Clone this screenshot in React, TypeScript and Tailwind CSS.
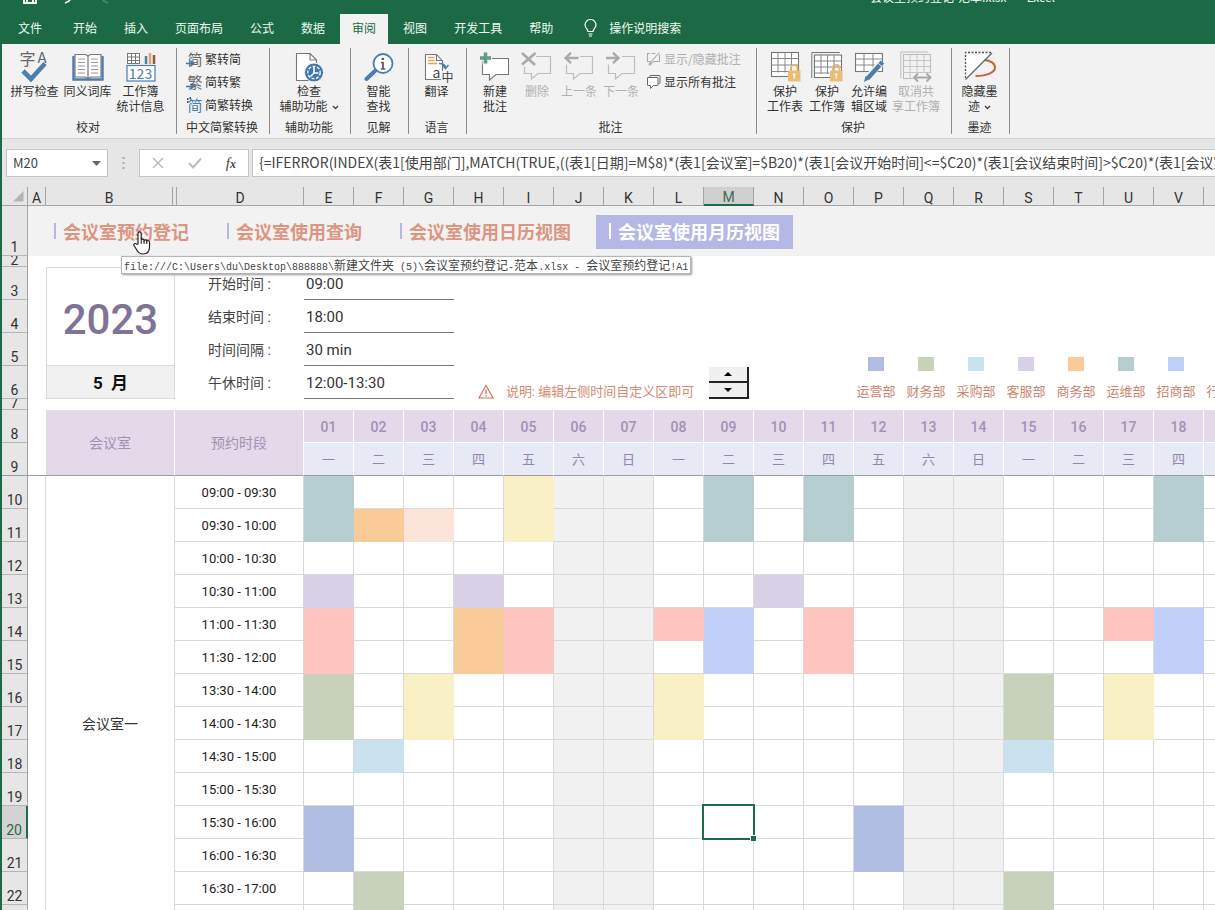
import React from "react";

type Kids = { children?: React.ReactNode };

const tabs = ["开始", "插入", "页面布局", "公式", "数据", "审阅", "视图", "开发工具", "帮助"];

/* ---------- ribbon icons ---------- */

const Svg = ({ children, w = 30, h = 30 }: Kids & { w?: number; h?: number }) => (
  <svg width={w} height={h} viewBox={`0 0 ${w} ${h}`} fill="none" aria-hidden="true">
    {children}
  </svg>
);

const SpellIcon = () => (
  <span className="relative block h-[30px] w-[30px] text-[#666]">
    <span className="absolute -top-0.5 left-0 text-[16px] leading-[16px]">字</span>
    <span className="absolute -top-0.5 left-[18px] text-[15px] leading-[14px]">A</span>
    <span className="absolute inset-0">
      <Svg>
        <path d="M3 19l8 8L25 11.500" stroke="#4a7db0" strokeWidth="4.600" />
      </Svg>
    </span>
  </span>
);

const BookIcon = () => (
  <Svg w={32}>
    <path d="M1.500 4V27.500h29V4" stroke="#4a7db0" strokeWidth="2.400" />
    <path d="M3 2.500h10.500l2.500 1.500 2.500-1.500H29V25H18.500L16 26.500 13.500 25H3z" fill="#fff" stroke="#777" strokeWidth="1.100" />
    <path d="M16 4v22" stroke="#777" strokeWidth="1.200" />
    <path d="M6 7h7M6 10.500h7M6 14h7M6 17.500h7M6 21h7M19 7h7M19 10.500h7M19 14h7M19 17.500h7M19 21h7" stroke="#999" />
  </Svg>
);

const StatsIcon = () => (
  <span className="relative block h-[30px] w-[30px]">
    <span className="absolute inset-0">
      <Svg>
        <rect x="1.500" y="1.500" width="12" height="10" fill="#fff" stroke="#777" />
        <path d="M5.500 1.500v10M9.500 1.500v10M1.500 5h12M1.500 8.500h12" stroke="#777" />
        <path d="M20 4v8" stroke="#4a7db0" strokeWidth="2.500" />
        <path d="M24 1v11" stroke="#e0a95a" strokeWidth="2.500" />
        <path d="M28 3v9" stroke="#8a5a44" strokeWidth="2.500" />
        <rect x="1" y="13.500" width="28" height="15.500" fill="#fff" stroke="#4a7db0" strokeWidth="1.200" />
      </Svg>
    </span>
    <span className="absolute inset-x-0 top-[14px] text-center text-[14px] leading-[15px] text-[#4a7db0]">123</span>
  </span>
);

const AccessIcon = () => (
  <Svg>
    <path d="M2.500 1.500h13.500l6.500 6.500v20.500h-20z" fill="#fff" stroke="#777" strokeWidth="1.100" />
    <path d="M16 1.500v6.500h6.500" stroke="#777" strokeWidth="1.100" />
    <circle cx="20" cy="20.500" r="9.500" fill="#3f78b0" stroke="#f2f2f2" />
    <circle cx="20" cy="20.500" r="6.200" stroke="#fff" strokeWidth="1.300" strokeDasharray="3 1.500" />
    <path d="M20 14.500V21h4.500M20 21l-3.500 3.500" stroke="#fff" strokeWidth="1.600" />
  </Svg>
);

const LookupIcon = () => (
  <Svg>
    <path d="M11.500 18.500L2.500 27" stroke="#4a7db0" strokeWidth="4" strokeLinecap="round" />
    <circle cx="19" cy="11.500" r="9.500" fill="#fff" stroke="#4a7db0" strokeWidth="1.800" />
    <path d="M19 10v7M17 10.500h2M16.800 17h4.400" stroke="#555" strokeWidth="1.700" />
    <circle cx="18.800" cy="7" r="1.300" fill="#555" />
  </Svg>
);

const TranslateIcon = () => (
  <span className="relative block h-[30px] w-[30px]">
    <span className="absolute inset-0">
      <Svg>
        <path d="M3.500 2.500h11l6 6.500v18.500h-17z" fill="#fff" stroke="#777" strokeWidth="1.100" />
        <path d="M14.500 2.500v6h6" stroke="#777" strokeWidth="1.100" />
        <path d="M6 5.500h6.500M6 8.500h6.500M6 11.500h9" stroke="#e0a95a" strokeWidth="1.300" />
        <path d="M17 11.500c4 0 6.500 1 6.500 4.500m-3-3l3 3.500 3-3.500" stroke="#4a7db0" strokeWidth="1.500" />
      </Svg>
    </span>
    <span className="absolute bottom-[3px] left-[11px] text-[14px] leading-[14px] text-[#444]">a</span>
    <span className="absolute -bottom-px -right-0.5 bg-[#f2f2f2] text-[12px] leading-[12px] text-[#444]">中</span>
  </span>
);

const bubble = "M3.500 6.500h26v16H17l-6.500 5.500v-5.500h-7z";

const NewCommentIcon = () => (
  <Svg w={32}>
    <path d={bubble} fill="#fff" stroke="#777" strokeWidth="1.100" />
    <path d="M6.500 0v12.500M.500 6h12.500" stroke="#f2f2f2" strokeWidth="6" />
    <path d="M6.500 .500v11M1 6h11" stroke="#5c9c88" strokeWidth="3.500" />
  </Svg>
);

const DeleteCommentIcon = () => (
  <Svg w={32}>
    <path d="M15 4.500h14.500v17H17l-6.500 5.500v-5.500h-7v-7" stroke="#bdbdbd" strokeWidth="1.200" />
    <path d="M1 1l13 12M14.500 1L1 12.500" stroke="#a9a9a9" strokeWidth="2.600" />
  </Svg>
);

const ArrowCommentIcon = ({ next }: { next?: boolean }) => (
  <Svg w={32}>
    <path d="M17 4.500h12.500v17H17L10.500 27v-5.500h-7v-9" stroke="#bdbdbd" strokeWidth="1.200" />
    {next ? (
      <path d="M1 6h12M8 .800L13.500 6 8 11.200" stroke="#a9a9a9" strokeWidth="2.400" />
    ) : (
      <path d="M2.500 6h13M8 .800L2.500 6 8 11.200" stroke="#a9a9a9" strokeWidth="2.400" />
    )}
  </Svg>
);

const ToggleCommentIcon = () => (
  <Svg w={16} h={16}>
    <path d="M4 2.500H1.500v8H4V14l3.500-3.500h6v-7M5.500 2.500h4M2.500 13.500l11-12" stroke="#aaa" strokeWidth="1.100" />
  </Svg>
);

const AllCommentsIcon = () => (
  <Svg w={16} h={16}>
    <path d="M4 3.500V2q0-.500.500-.500H13.500q.500 0 .500.500V9q0 .500-.500.500H12.500" stroke="#666" />
    <path d="M2 3.500h9.500q.500 0 .500.500v7q0 .500-.500.500H7.500L4.500 14.500v-3H2q-.500 0-.500-.500V4q0-.500.500-.500z" fill="#fff" stroke="#666" />
  </Svg>
);

const Lock = () => (
  <g>
    <path d="M22 20v-3a3.200 3.200 0 016.400 0v3" stroke="#e5b468" strokeWidth="1.800" />
    <rect x="19" y="19.500" width="12.500" height="11" fill="#ecbd74" />
    <path d="M25.200 22.500v5M24 23.500h2.500" stroke="#fff" strokeWidth="1.300" />
  </g>
);

const ProtectSheetIcon = () => (
  <Svg w={32} h={32}>
    <rect x="2.500" y="1.500" width="27" height="24" fill="#fff" stroke="#777" strokeWidth="1.100" />
    <path d="M9 1.500v20M16 1.500v20M22.500 1.500v20M2.500 7.500h27M2.500 14h27M2.500 20.500h17" stroke="#888" />
    <Lock />
  </Svg>
);

const ProtectBookIcon = () => (
  <Svg w={32} h={32}>
    <path d="M.800 27V1.500h28" stroke="#777" />
    <rect x="3.500" y="4" width="27" height="22.500" fill="#fff" stroke="#777" strokeWidth="1.100" />
    <path d="M10 4v19M16.500 4v19M23 4v19M3.500 10h27M3.500 16h27M3.500 22h15" stroke="#888" />
    <Lock />
  </Svg>
);

const EditRangeIcon = () => (
  <Svg w={32} h={32}>
    <rect x="2.500" y="2.500" width="27" height="18" fill="#fff" stroke="#777" strokeWidth="1.100" />
    <path d="M11 2.500v18M20 2.500v18M2.500 8h27M2.500 14h27" stroke="#888" />
    <path d="M29 10.500L14.500 27" stroke="#f2f2f2" strokeWidth="6.500" />
    <path d="M29.500 11L14.500 27.500" stroke="#4a7db0" strokeWidth="4.400" />
    <path d="M12.500 25l3.500 3.500-5 2.500z" fill="#4a7db0" />
    <path d="M25.500 12.500l4 3.500" stroke="#f2f2f2" />
  </Svg>
);

const UnshareIcon = () => (
  <Svg w={32} h={32}>
    <path d="M.800 27V1h27" stroke="#bdbdbd" />
    <rect x="3.500" y="3.500" width="27" height="24" stroke="#bdbdbd" strokeWidth="1.100" />
    <path d="M10 3.500v24M17 3.500v24M24 3.500v24M3.500 9.500h27M3.500 15.500h27M3.500 21.500h27" stroke="#c4c4c4" />
    <rect x="13" y="22" width="18" height="9" fill="#f2f2f2" />
    <path d="M14 26.500h16M18 22.500l-4 4 4 4M26.500 22.500l4 4-4 4" stroke="#a9a9a9" strokeWidth="2" />
  </Svg>
);

const InkIcon = () => (
  <Svg w={32} h={32}>
    <path d="M1.500 28V1.500H27z" fill="#fff" />
    <path d="M1.500 27V1.500H27" stroke="#555" strokeWidth="1.300" strokeDasharray="2 1.500" />
    <path d="M20.500 9c6 .500 10.500 3.500 10.500 7.500 0 5-8 8.500-19.500 8.500" stroke="#c8643c" strokeWidth="2" />
    <path d="M1.500 28.500L28 2" stroke="#666" strokeWidth="1.300" />
  </Svg>
);

const Chevron = () => (
  <svg className="ml-1 inline-block" width="7" height="5" viewBox="0 0 7 5" fill="none" aria-hidden="true">
    <path d="M1 1l2.500 2.500L6 1" stroke="#444" strokeWidth="1.300" />
  </svg>
);

/* ---------- ribbon parts ---------- */

const BigButton = ({ icon, children, off, width }: Kids & { icon: React.ReactNode; off?: boolean; width: string }) => (
  <button type="button" className={`flex shrink-0 flex-col items-center whitespace-nowrap leading-[15px] ${width} ${off ? "text-[#b0b0b0]" : "text-[#333]"}`}>
    <span className="flex h-8 items-center justify-center">{icon}</span>
    <span>{children}</span>
  </button>
);

const Group = ({ title, width, pad = "", children }: Kids & { title: string; width: string; pad?: string }) => (
  <section aria-label={title} className={`flex shrink-0 flex-col border-r border-[#8c8c8c] pr-0.5 ${width}`}>
    <div className={`flex flex-1 items-start pt-[3px] ${pad}`}>{children}</div>
    <h2 className="text-center leading-[14px] text-[#333]">{title}</h2>
  </section>
);

const SmallButton = ({ icon, children, off }: Kids & { icon: React.ReactNode; off?: boolean }) => (
  <button type="button" className={`flex h-[23px] items-center gap-0.5 whitespace-nowrap ${off ? "text-[#b0b0b0]" : "text-[#333]"}`}>
    {icon}
    {children}
  </button>
);

const HanIcon = ({ glyph, blue }: { glyph: string; blue?: boolean }) => (
  <span className={`relative block w-4 text-[15px] leading-4 ${blue ? "text-[#4a7db0]" : "text-[#666]"}`}>
    {glyph}
    {blue ? (
      <svg className="absolute -left-px top-0" width="6" height="9" viewBox="0 0 6 9" fill="none" aria-hidden="true">
        <path d="M1 2h1.500M3.500 1H5M1 5h1.500" stroke="#555" strokeWidth="1.800" />
      </svg>
    ) : (
      <svg className="absolute -left-px bottom-0" width="9" height="7" viewBox="0 0 9 7" fill="none" aria-hidden="true">
        <path d="M0 3.500h7M4.500 1L7.500 3.500 4.500 6" stroke="#3f78b0" strokeWidth="1.700" />
      </svg>
    )}
  </span>
);

/* ---------- sheet data ---------- */

const columns = ["E", "F", "G", "H", "I", "J", "K", "L", "M", "N", "O", "P", "Q", "R", "S", "T", "U", "V", "W"];
const weekdays = ["一", "二", "三", "四", "五", "六", "日"];
const slots = [
  "09:00 - 09:30", "09:30 - 10:00", "10:00 - 10:30", "10:30 - 11:00", "11:00 - 11:30",
  "11:30 - 12:00", "13:30 - 14:00", "14:00 - 14:30", "14:30 - 15:00", "15:00 - 15:30",
  "15:30 - 16:00", "16:00 - 16:30", "16:30 - 17:00", "17:00 - 17:30", "17:30 - 18:00",
];

const fills = {
  teal: "bg-[#b6ced0] border-[#b6ced0]",
  orange: "bg-[#f9cb99] border-[#f9cb99]",
  peach: "bg-[#fce4d9] border-[#fce4d9]",
  yellow: "bg-[#faf0c5] border-[#faf0c5]",
  purple: "bg-[#d9d2e6] border-[#d9d2e6]",
  pink: "bg-[#fdc4c0] border-[#fdc4c0]",
  blue: "bg-[#c0d0f8] border-[#c0d0f8]",
  green: "bg-[#c8d2bb] border-[#c8d2bb]",
  sky: "bg-[#cae2f0] border-[#cae2f0]",
  indigo: "bg-[#b1bee1] border-[#b1bee1]",
};
type Fill = keyof typeof fills;

/* [day, first row, last row, department colour] */
const bookings: [number, number, number, Fill][] = [
  [1, 10, 11, "teal"], [9, 10, 11, "teal"], [11, 10, 11, "teal"], [18, 10, 11, "teal"],
  [2, 11, 11, "orange"], [3, 11, 11, "peach"], [5, 10, 11, "yellow"],
  [1, 13, 13, "purple"], [4, 13, 13, "purple"], [10, 13, 13, "purple"],
  [1, 14, 15, "pink"], [5, 14, 15, "pink"], [8, 14, 14, "pink"], [11, 14, 15, "pink"], [17, 14, 14, "pink"],
  [4, 14, 15, "orange"], [9, 14, 15, "blue"], [18, 14, 15, "blue"],
  [1, 16, 17, "green"], [15, 16, 17, "green"],
  [3, 16, 17, "yellow"], [8, 16, 17, "yellow"], [17, 16, 17, "yellow"],
  [2, 18, 18, "sky"], [15, 18, 18, "sky"],
  [1, 20, 21, "indigo"], [12, 20, 21, "indigo"],
  [2, 22, 23, "green"], [15, 22, 23, "green"],
];

const cellFill = (day: number, row: number) => {
  const hit = bookings.find(([d, a, b]) => d === day && row >= a && row <= b);
  if (hit) return fills[hit[3]];
  return (day - 1) % 7 > 4 ? "bg-[#f1f1f1] border-[#d9d9d9]" : "border-[#d9d9d9]";
};

const legend: [string, string][] = [
  ["运营部", "bg-[#b1bee1]"], ["财务部", "bg-[#c8d2bb]"], ["采购部", "bg-[#cae2f0]"], ["客服部", "bg-[#d9d2e6]"],
  ["商务部", "bg-[#f9cb99]"], ["运维部", "bg-[#b6ced0]"], ["招商部", "bg-[#c0d0f8]"], ["行政部", "bg-[#fce4d9]"],
];

const RowHead = ({ n, short, active }: { n: number; short?: boolean; active?: boolean }) => (
  <th
    scope="row"
    className={`border-b border-r p-0 align-bottom text-[14px] font-normal ${n === 9 ? "border-b-[#9b9ca6]" : "border-b-[#b5b5b5]"} ${
      active ? "border-r-2 border-r-[#1f6b47] bg-[#d3d3d3] text-[#1f6b47]" : "border-r-[#a5a5a5] bg-[#e6e6e6] text-[#333]"
    }`}
  >
    <div className={`flex items-end justify-center overflow-hidden ${short ? "h-[10px] leading-[12px]" : "h-4 leading-4"}`}>{n}</div>
  </th>
);

const Setting = ({ label, value }: { label: string; value: string }) => (
  <>
    <td colSpan={2} className="p-0 pl-[33px] pt-0.5 text-[14px] text-[#444]">{label} :</td>
    <td colSpan={3} className="border-b border-[#777] p-0 pl-0.5 pt-0.5 text-[15px] text-[#333]">{value}</td>
  </>
);

const NavLink = ({ children, active }: Kids & { active?: boolean }) => (
  <a
    href="#sheet"
    className={`flex h-[34px] items-center gap-[7px] whitespace-nowrap px-[13px] pb-0.5 text-[18px] font-bold ${active ? "bg-[#b5b8e5] text-white" : "text-[#dc9580]"}`}
  >
    <span className={`h-4 w-0.5 ${active ? "bg-white" : "bg-[#b5b8e5]"}`} />
    {children}
  </a>
);

const Mono = ({ children }: Kids) => (
  <span className="whitespace-pre font-['Liberation_Mono',monospace] text-[10px]">{children}</span>
);

function Sheet() {
  return (
    <table id="sheet" className="w-max table-fixed border-separate border-spacing-0 font-[Roboto,'Noto_Sans_CJK_SC',sans-serif]">
      <colgroup>
        <col className="w-[26px]" />
        <col className="w-[18px]" />
        <col className="w-[127px]" />
        <col className="w-[2px]" />
        <col className="w-[2px]" />
        <col className="w-[127px]" />
        {columns.map((c) => <col key={c} className="w-[50px]" />)}
      </colgroup>
      <thead>
        <tr className="h-[19px] bg-[#e6e6e6] text-[14px] leading-[14px] text-[#333]">
          <td className="border-b border-r border-[#a5a5a5] p-0">
            <svg className="ml-auto mr-[3px]" width="11" height="11" viewBox="0 0 11 11" aria-hidden="true"><path d="M10.500 0v10.500H0z" fill="#b3b3b3" /></svg>
          </td>
          <th scope="col" className="border-b border-r border-[#a5a5a5] p-0 pt-[3px] font-normal">A</th>
          <th scope="col" className="border-b border-r border-[#a5a5a5] p-0 pt-[3px] font-normal">B</th>
          <td colSpan={2} className="border-b border-r border-[#a5a5a5] p-0" />
          <th scope="col" className="border-b border-r border-[#a5a5a5] p-0 pt-[3px] font-normal">D</th>
          {columns.map((c) => (
            <th
              key={c}
              scope="col"
              className={`p-0 pt-[3px] font-normal ${c === "M" ? "border-b-2 border-r border-b-[#1f6b47] border-r-[#a5a5a5] bg-[#d0d0d0] text-[#3c6b54]" : "border-b border-r border-[#a5a5a5]"}`}
            >
              {c}
            </th>
          ))}
        </tr>
      </thead>
      <tbody>
        <tr className="h-[50px]">
          <RowHead n={1} />
          <td colSpan={24} className="bg-[#f2f2f2] p-0">
            <nav aria-label="会议室" className="flex items-center gap-3 pl-[13px] pt-0.5 font-['Noto_Sans_CJK_SC',sans-serif]">
              <NavLink>会议室预约登记</NavLink>
              <NavLink>会议室使用查询</NavLink>
              <NavLink>会议室使用日历视图</NavLink>
              <NavLink active>会议室使用月历视图</NavLink>
            </nav>
          </td>
        </tr>
        <tr className="h-[11px]">
          <RowHead n={2} short />
          <td colSpan={24} className="p-0" />
        </tr>
        <tr className="h-[33px]">
          <RowHead n={3} />
          <td rowSpan={5} />
          <td colSpan={2} rowSpan={3} className="border border-[#d9d9d9] p-0 pt-1.5 text-center text-[42px] font-medium leading-[44px] text-[#7f7396]">2023</td>
          <Setting label="开始时间" value="09:00" />
          <td colSpan={16} />
        </tr>
        <tr className="h-[33px]">
          <RowHead n={4} />
          <Setting label="结束时间" value="18:00" />
          <td colSpan={16} />
        </tr>
        <tr className="h-[33px]">
          <RowHead n={5} />
          <Setting label="时间间隔" value="30 min" />
          <td colSpan={8} />
          {legend.map(([name, color]) => (
            <td key={name} rowSpan={2} className="p-0 pr-1.5 align-bottom">
              <div className="flex flex-col items-center gap-[13px] whitespace-nowrap text-[13px] leading-[15px] text-[#cb866f]">
                <span className={`h-[14px] w-4 ${color}`} />
                {name}
              </div>
            </td>
          ))}
        </tr>
        <tr className="h-[33px]">
          <RowHead n={6} />
          <td colSpan={2} className="border-x border-b border-[#d9d9d9] bg-[#f1f1f1] p-0 pt-[3px] text-center text-[17px] font-bold text-[#111]">5&nbsp; 月</td>
          <Setting label="午休时间" value="12:00-13:30" />
          <td colSpan={5} className="p-0 align-bottom">
            <p className="flex items-center gap-3 whitespace-nowrap pl-6 text-[13px] leading-[15px] text-[#d58a72]">
              <svg width="16" height="15" viewBox="0 0 16 15" fill="none" aria-hidden="true">
                <path d="M8 1.500L15 14H1z" stroke="#d0735a" strokeWidth="1.200" />
                <path d="M8 5.500v4.500M8 11v1.500" stroke="#d0735a" strokeWidth="1.300" />
              </svg>
              说明: 编辑左侧时间自定义区即可
            </p>
          </td>
          <td colSpan={3} className="p-0 pl-[5px]">
            <div className="flex w-10 flex-col">
              <button type="button" aria-label="上一月" className="flex h-4 items-center justify-center border-b-2 border-r-2 border-[#222] bg-[#f0f0f0]">
                <svg width="8" height="4" viewBox="0 0 8 4" aria-hidden="true"><path d="M4 0l4 4H0z" fill="#000" /></svg>
              </button>
              <button type="button" aria-label="下一月" className="flex h-4 items-center justify-center border-b-2 border-r-2 border-[#222] bg-[#f0f0f0]">
                <svg width="8" height="4" viewBox="0 0 8 4" aria-hidden="true"><path d="M4 4l4-4H0z" fill="#000" /></svg>
              </button>
            </div>
          </td>
        </tr>
        <tr className="h-[11px]">
          <RowHead n={7} short />
          <td colSpan={23} className="p-0" />
        </tr>
        <tr className="h-[33px] bg-[#e3d9e9] text-[14px] text-[#9f92b5]">
          <RowHead n={8} />
          <td rowSpan={2} className="border-b border-[#9b9ca6] bg-white p-0" />
          <th scope="col" colSpan={2} rowSpan={2} className="border-b border-r border-b-[#9b9ca6] border-r-white p-0 pt-0.5 font-normal">会议室</th>
          <th scope="col" colSpan={2} rowSpan={2} className="border-b border-r border-b-[#9b9ca6] border-r-white p-0 pt-0.5 font-normal">预约时段</th>
          {columns.map((c, i) => (
            <th key={c} scope="col" className="border-b border-r border-white p-0 pt-0.5 font-medium">{String(i + 1).padStart(2, "0")}</th>
          ))}
        </tr>
        <tr className="h-[33px] bg-[#e7e9f5] text-[13px] text-[#9287ab]">
          <RowHead n={9} />
          {columns.map((c, i) => (
            <td key={c} className="border-b border-r border-b-[#9b9ca6] border-r-white p-0 pt-0.5 text-center">{weekdays[i % 7]}</td>
          ))}
        </tr>
        {slots.map((slot, i) => {
          const row = i + 10;
          return (
            <tr key={slot} className="h-[33px]">
              <RowHead n={row} active={row === 20} />
              {i === 0 && (
                <>
                  <td rowSpan={15} className="border-r border-[#d9d9d9] p-0" />
                  <td rowSpan={15} colSpan={2} className="border-b border-r border-[#d9d9d9] p-0 pt-0.5 text-center text-[14px] text-[#333]">会议室一</td>
                </>
              )}
              <td colSpan={2} className="border-b border-r border-[#d9d9d9] p-0 pt-0.5 text-center text-[13px] text-[#222]">{slot}</td>
              {columns.map((c, d) => (
                <td key={c} className={`relative border-b border-r p-0 ${cellFill(d + 1, row)}`}>
                  {c === "M" && row === 20 && (
                    <span className="absolute -bottom-0.5 -left-0.5 -right-0.5 -top-0.5 z-10 border-2 border-[#1f6b47]">
                      <span className="absolute -bottom-[3px] -right-[3px] h-[6px] w-[6px] border-l border-t border-white bg-[#1f6b47]" />
                    </span>
                  )}
                </td>
              ))}
            </tr>
          );
        })}
      </tbody>
    </table>
  );
}

export default function App() {
  return (
    <div className="flex h-screen flex-col overflow-hidden bg-white font-['Noto_Sans_CJK_SC',sans-serif] text-[12px]">
      <header className="shrink-0 bg-[#1c6a45] text-[#eefaf2]">
        <div className="flex h-[14px] items-start justify-between overflow-hidden">
          <div className="flex h-1 items-end gap-6 pl-[23px]">
            <svg width="14" height="14" viewBox="0 0 14 14" fill="none" aria-hidden="true">
              <path d="M1 1h12v12H1zM4 13V9h6v4" stroke="#fff" strokeWidth="1.800" />
            </svg>
            <svg width="14" height="14" viewBox="0 0 14 14" fill="none" aria-hidden="true">
              <path d="M4 13c4-1 6-3 6-7" stroke="#fff" strokeWidth="1.800" />
            </svg>
            <svg width="14" height="14" viewBox="0 0 14 14" fill="none" aria-hidden="true">
              <path d="M9 13c-4-1-6-3-6-7" stroke="#4c8d6e" strokeWidth="1.800" />
            </svg>
          </div>
          <h1 className="flex h-[6px] items-end whitespace-pre pr-40 leading-[18px]">会议室预约登记-范本.xlsx   -   Excel</h1>
        </div>
        <nav aria-label="功能区" className="flex h-[30px] items-stretch gap-[3px] pl-0.5">
          <button type="button" className="px-4 pb-0.5">文件</button>
          {tabs.map((t) => (
            <button key={t} type="button" className={t === "审阅" ? "bg-[#f2f2f2] px-3 pb-0.5 text-[#1c6a45]" : "px-3 pb-0.5"}>{t}</button>
          ))}
          <button type="button" className="flex items-center gap-3 px-4 pb-0.5">
            <svg width="13" height="18" viewBox="0 0 13 18" fill="none" aria-hidden="true">
              <path d="M4 12.500c0-2.500-3-3.500-3-6.500a5.500 5.500 0 0111 0c0 3-3 4-3 6.500zM4.500 15h4M5 17h3" stroke="#fff" strokeWidth="1.200" />
            </svg>
            操作说明搜索
          </button>
        </nav>
      </header>

      <div className="flex min-h-0 flex-1 flex-col border-l-2 border-[#1c6a45]">
        <div className="flex h-[95px] shrink-0 overflow-hidden border-b border-[#d2d2d2] bg-[#f2f2f2] pb-1 pt-1">
          <Group title="校对" width="w-[175px]" pad="pl-1.5">
            <BigButton width="w-[53px]" icon={<SpellIcon />}>拼写检查</BigButton>
            <BigButton width="w-[53px]" icon={<BookIcon />}>同义词库</BigButton>
            <BigButton width="w-[53px]" icon={<StatsIcon />}>工作簿<br />统计信息</BigButton>
          </Group>
          <Group title="中文简繁转换" width="w-[93px]" pad="pl-[10px]">
            <div className="-mt-1 flex flex-col">
              <SmallButton icon={<HanIcon glyph="简" />}>繁转简</SmallButton>
              <SmallButton icon={<HanIcon glyph="繁" />}>简转繁</SmallButton>
              <SmallButton icon={<HanIcon glyph="简" blue />}>简繁转换</SmallButton>
            </div>
          </Group>
          <Group title="辅助功能" width="w-[81px]" pad="justify-center">
            <BigButton width="w-[64px]" icon={<AccessIcon />}>检查<br />辅助功能<Chevron /></BigButton>
          </Group>
          <Group title="见解" width="w-[58px]" pad="justify-center">
            <BigButton width="w-[42px]" icon={<LookupIcon />}>智能<br />查找</BigButton>
          </Group>
          <Group title="语言" width="w-[58px]" pad="justify-center">
            <BigButton width="w-[42px]" icon={<TranslateIcon />}>翻译</BigButton>
          </Group>
          <Group title="批注" width="w-[290px]" pad="pl-[7px]">
            <BigButton width="w-[42px]" icon={<NewCommentIcon />}>新建<br />批注</BigButton>
            <BigButton width="w-[42px]" off icon={<DeleteCommentIcon />}>删除</BigButton>
            <BigButton width="w-[42px]" off icon={<ArrowCommentIcon />}>上一条</BigButton>
            <BigButton width="w-[42px]" off icon={<ArrowCommentIcon next />}>下一条</BigButton>
            <div className="-mt-1 flex flex-col pl-1">
              <SmallButton off icon={<ToggleCommentIcon />}>显示/隐藏批注</SmallButton>
              <SmallButton icon={<AllCommentsIcon />}>显示所有批注</SmallButton>
            </div>
          </Group>
          <Group title="保护" width="w-[195px]" pad="pl-[7px]">
            <BigButton width="w-[42px]" icon={<ProtectSheetIcon />}>保护<br />工作表</BigButton>
            <BigButton width="w-[42px]" icon={<ProtectBookIcon />}>保护<br />工作簿</BigButton>
            <BigButton width="w-[42px]" icon={<EditRangeIcon />}>允许编<br />辑区域</BigButton>
            <BigButton width="w-[52px]" off icon={<UnshareIcon />}>取消共<br />享工作簿</BigButton>
          </Group>
          <Group title="墨迹" width="w-[58px]" pad="justify-center">
            <BigButton width="w-[42px]" icon={<InkIcon />}>隐藏墨<br />迹<Chevron /></BigButton>
          </Group>
        </div>

        <div className="flex shrink-0 items-center bg-[#e6e6e6] py-[10px] pl-1">
          <div className="flex h-7 w-[102px] items-center border border-[#c6c6c6] bg-white pl-1.5 pr-1">
            <input aria-label="名称框" defaultValue="M20" className="w-0 flex-1 text-[13px] text-[#444] outline-none" />
            <button type="button" aria-label="展开名称框" className="p-0.5">
              <svg width="9" height="5" viewBox="0 0 9 5" aria-hidden="true"><path d="M0 0h9L4.500 5z" fill="#666" /></svg>
            </button>
          </div>
          <svg className="mx-[14px]" width="3" height="14" viewBox="0 0 3 14" aria-hidden="true">
            <path d="M.500 1h2v2h-2zM.500 6h2v2h-2zM.500 11h2v2h-2z" fill="#aaa" />
          </svg>
          <div className="flex h-7 w-[110px] items-center justify-around border border-[#c6c6c6] bg-white">
            <button type="button" aria-label="取消">
              <svg width="12" height="12" viewBox="0 0 12 12" fill="none" aria-hidden="true"><path d="M1 1l10 10M11 1L1 11" stroke="#bbb" strokeWidth="1.500" /></svg>
            </button>
            <button type="button" aria-label="输入">
              <svg width="14" height="12" viewBox="0 0 14 12" fill="none" aria-hidden="true"><path d="M1 6l4 4.500L13 1.500" stroke="#bbb" strokeWidth="2" /></svg>
            </button>
            <button type="button" aria-label="插入函数" className="font-['Liberation_Serif',serif] text-[15px] italic leading-4 text-[#444]">
              f<span className="text-[12px] font-bold">x</span>
            </button>
          </div>
          <input
            aria-label="编辑栏"
            defaultValue="{=IFERROR(INDEX(表1[使用部门],MATCH(TRUE,((表1[日期]=M$8)*(表1[会议室]=$B20)*(表1[会议开始时间]<=$C20)*(表1[会议结束时间]>$C20)*(表1[会议室]"
            className="ml-[3px] h-7 min-w-0 flex-1 border-y border-l border-[#c6c6c6] bg-white pb-0.5 pl-1.5 text-[14px] text-[#444] outline-none"
          />
        </div>

        <main className="relative min-h-0 flex-1 overflow-hidden">
          <Sheet />
          <div role="tooltip" className="absolute left-[119px] top-[69px] z-20 h-[18px] whitespace-nowrap border border-[#b5b5b5] bg-white px-0.5 text-[12px] leading-[15px] text-[#444] shadow-[1px_1px_2px_#999]">
            <Mono>{"file:///C:\\Users\\du\\Desktop\\888888\\"}</Mono>新建文件夹<Mono>{" (5)\\"}</Mono>会议室预约登记<Mono>-</Mono>范本<Mono>{".xlsx - "}</Mono>会议室预约登记<Mono>!A1</Mono>
          </div>
          <svg className="absolute left-[131px] top-[44px] z-30" width="18" height="24" viewBox="0 0 18 24" aria-hidden="true">
            <path
              d="M5 13V2.500a1.600 1.600 0 013.200 0V9c.500-1.300 2.800-1 2.900.500.600-1.200 2.600-.800 2.700.600.700-.900 2.700-.500 2.700 1.200V16c0 4-2 7-6.500 7-3.500 0-5-1.500-6.500-4.500L1 14.500c-.800-1.700 1.300-2.700 2.500-1.300z"
              fill="#fff"
              stroke="#222"
              strokeWidth="1.200"
            />
            <path d="M8.200 9v4M11.100 9.500V13M13.800 10.500V13" stroke="#222" />
          </svg>
        </main>
      </div>
    </div>
  );
}
